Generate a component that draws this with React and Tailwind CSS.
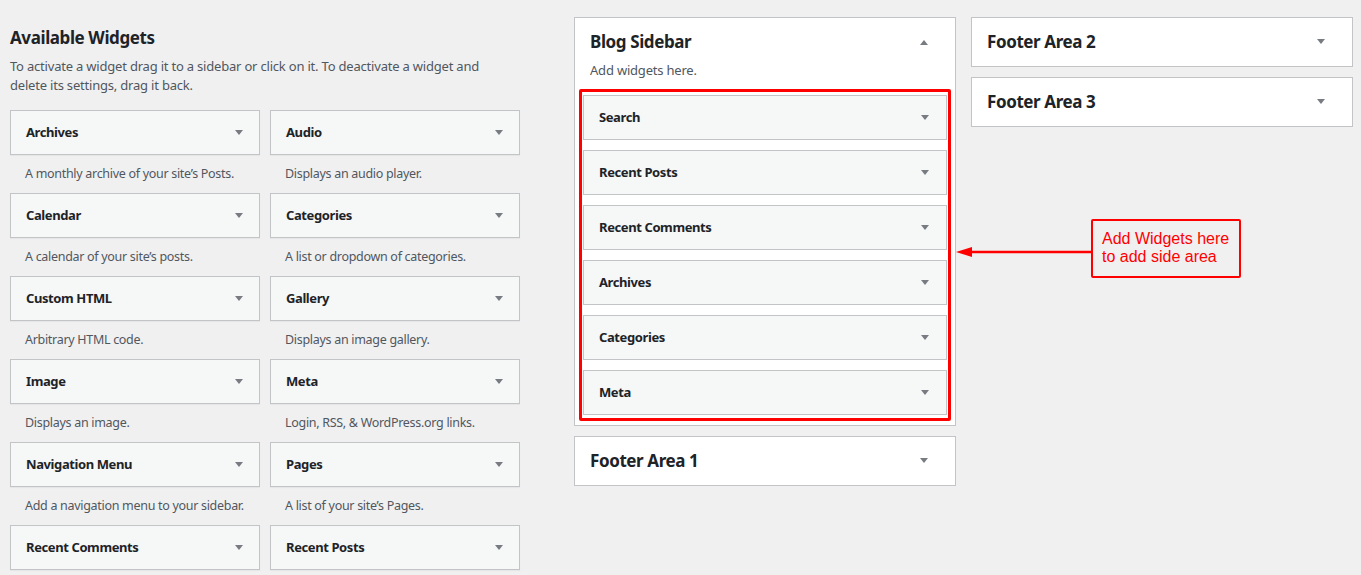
import React from "react";

const Tri = ({ up }) => (
  <svg width="10" height="6" viewBox="0 0 10 6" className="shrink-0">
    {up ? <path d="M1 6 L5 1 L9 6 Z" fill="#787c82" /> : <path d="M1 0 L9 0 L5 5 Z" fill="#787c82" />}
  </svg>
);

const widgets = [
  ["Archives", "A monthly archive of your site’s Posts."],
  ["Audio", "Displays an audio player."],
  ["Calendar", "A calendar of your site’s posts."],
  ["Categories", "A list or dropdown of categories."],
  ["Custom HTML", "Arbitrary HTML code."],
  ["Gallery", "Displays an image gallery."],
  ["Image", "Displays an image."],
  ["Meta", "Login, RSS, & WordPress.org links."],
  ["Navigation Menu", "Add a navigation menu to your sidebar."],
  ["Pages", "A list of your site’s Pages."],
  ["Recent Comments", null],
  ["Recent Posts", null],
];

const WidgetCard = ({ title }) => (
  <div className="h-[45px] border border-[#c3c4c7] bg-[#f6f7f7] shadow-[0_1px_1px_rgba(0,0,0,0.04)] flex items-center justify-between pl-[15px] pr-[15px]">
    <span className="text-[13px] font-bold tracking-[-0.4px] text-[#1d2327]">{title}</span>
    <Tri />
  </div>
);

const Area = ({ title }) => (
  <div className="h-[50px] border border-[#c3c4c7] bg-white flex items-center justify-between pl-[15px] pr-[26px]">
    <span className="text-[17px] font-bold tracking-[-0.4px] text-[#1d2327]">{title}</span>
    <Tri />
  </div>
);

export default function App() {
  return (
    <div className="relative w-[1361px] h-[575px] overflow-hidden bg-[#f0f0f1] text-[#1d2327]" style={{ fontFamily: "'Noto Sans', sans-serif" }}>
      <div className="flex items-start pl-[10px]">
        <div className="w-[510px] shrink-0">
          <h2 className="pt-[27px] text-[17px] font-bold leading-[22px] tracking-[-0.4px]">Available Widgets</h2>
          <p className="mt-[8px] w-[480px] text-[13px] leading-[19px] tracking-[-0.2px] text-[#50575e]">
            To activate a widget drag it to a sidebar or click on it. To deactivate a widget and delete its settings, drag it back.
          </p>
          <div className="mt-[15px] grid grid-cols-2 gap-x-[10px]">
            {widgets.map(([t, d]) => (
              <div key={t} className="h-[83px]">
                <WidgetCard title={t} />
                {d && <p className="pl-[15px] pt-[10px] text-[12.5px] leading-[18px] tracking-[-0.3px] text-[#50575e]">{d}</p>}
              </div>
            ))}
          </div>
        </div>
        <div className="ml-[54px] mt-[17px] w-[382px] shrink-0 flex flex-col gap-[10px]">
          <div className="border border-[#c3c4c7] bg-white pb-[4px]">
            <div className="flex items-center justify-between pl-[15px] pr-[26px] h-[44px] pt-[4px]">
              <span className="text-[17px] font-bold tracking-[-0.4px]">Blog Sidebar</span>
              <Tri up />
            </div>
            <p className="pl-[15px] text-[13px] leading-[16px] tracking-[-0.2px] text-[#50575e]">Add widgets here.</p>
            <div className="mx-[4px] mt-[11px] border-[3px] border-[#ff0000] rounded-[2px] px-[1px] pt-[3px] pb-[3px] flex flex-col gap-[10px]">
              {["Search", "Recent Posts", "Recent Comments", "Archives", "Categories", "Meta"].map((t) => (
                <div key={t} className="h-[45px] border border-[#c3c4c7] bg-[#f6f7f7] flex items-center justify-between pl-[15px] pr-[16px]">
                  <span className="text-[13px] font-bold tracking-[-0.4px]">{t}</span>
                  <Tri />
                </div>
              ))}
            </div>
          </div>
          <Area title="Footer Area 1" />
        </div>
        <div className="ml-[15px] mt-[17px] w-[382px] shrink-0 flex flex-col gap-[10px]">
          <Area title="Footer Area 2" />
          <Area title="Footer Area 3" />
        </div>
      </div>
      <svg className="absolute left-[954px] top-[244px]" width="140" height="16" viewBox="0 0 140 16">
        <line x1="12" y1="8" x2="138" y2="8" stroke="#ff0000" strokeWidth="2.5" />
        <path d="M2 8 L18 3 L18 13 Z" fill="#ff0000" />
      </svg>
      <div className="absolute left-[1091px] top-[219px] w-[150px] h-[59px] border-2 border-[#ff0000] rounded-[2px] pl-[9px] pt-[9px] text-[16px] leading-[18px] text-[#ff0000]" style={{ fontFamily: "'Liberation Sans', Arial, sans-serif" }}>
        Add Widgets here<br />to add side area
      </div>
    </div>
  );
}
